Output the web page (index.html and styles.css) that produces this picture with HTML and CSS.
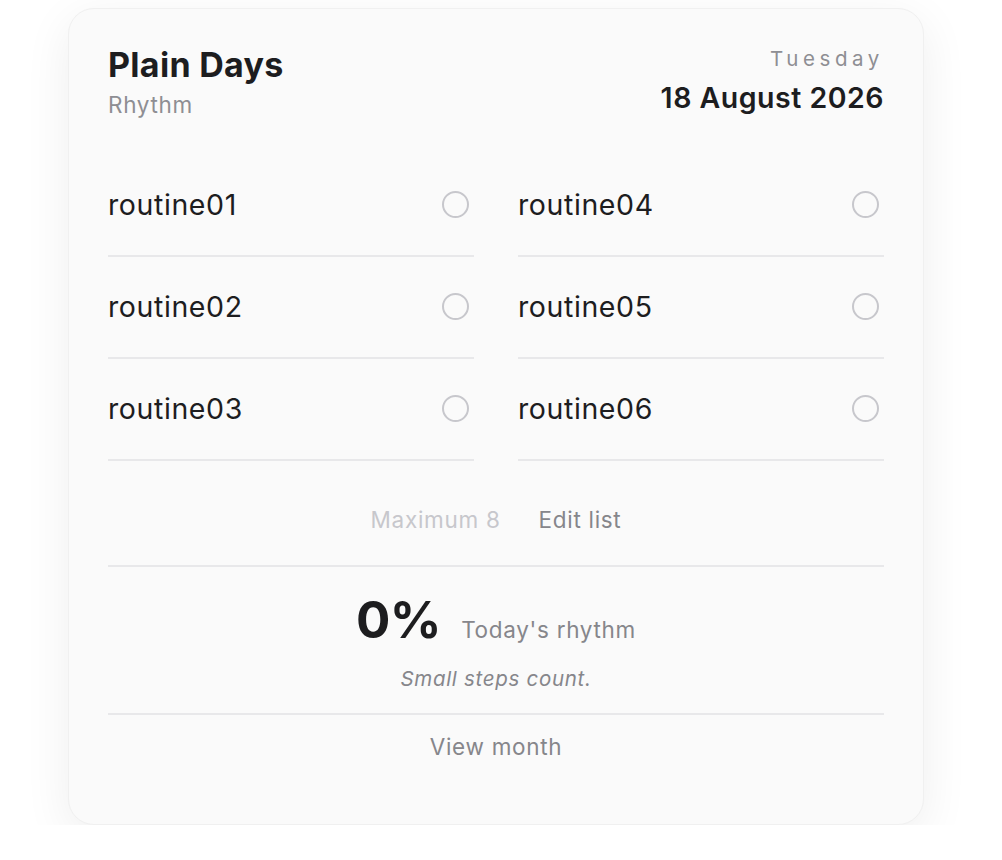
FILE: index.html
```html
<!DOCTYPE html>
<html lang="en">
<head>
    <meta charset="UTF-8">
    <meta name="viewport" content="width=device-width, initial-scale=1.0">
    <title>Plain Days</title>
    <link rel="stylesheet" href="styles.css">
</head>
<body>
    <div class="card">
        <div class="header">
            <div>
                <h1 class="title">Plain Days</h1>
                <div class="subtitle">Rhythm</div>
            </div>
            <div class="date">
                <div class="weekday">Tuesday</div>
                <div class="full-date">18 August 2026</div>
            </div>
        </div>

        <div class="routines">
            <div class="routine"><span>routine01</span><span class="check"></span></div>
            <div class="routine"><span>routine04</span><span class="check"></span></div>
            <div class="routine"><span>routine02</span><span class="check"></span></div>
            <div class="routine"><span>routine05</span><span class="check"></span></div>
            <div class="routine"><span>routine03</span><span class="check"></span></div>
            <div class="routine"><span>routine06</span><span class="check"></span></div>
        </div>

        <div class="list-actions">
            <span class="limit">Maximum 8</span>
            <span class="edit">Edit list</span>
        </div>

        <div class="stats">
            <div class="score">
                <span class="percent">0%</span>
                <span class="score-label">Today's rhythm</span>
            </div>
            <div class="motto">Small steps count.</div>
        </div>

        <div class="month-link">View month</div>
    </div>
</body>
</html>
```

FILE: styles.css
```css
body {
    margin: 0;
    padding: 8px 0 0;
    background: #ffffff;
    font-family: Inter, "Noto Sans", sans-serif;
    color: #1d1d1f;
}
.card {
    box-sizing: border-box;
    width: 856px;
    margin: 0 0 0 68px;
    padding: 36px 39px 0;
    height: 817px;
    background: #fafafa;
    border: 1px solid #f0f0f0;
    border-radius: 26px;
    box-shadow: 0 12px 48px rgba(0,0,0,0.07);
}
.header {
    display: flex;
    justify-content: space-between;
    align-items: flex-start;
}
.title {
    margin: 0;
    font-size: 34px;
    font-weight: 700;
    line-height: 1.2;
    letter-spacing: 0.3px;
}
.subtitle {
    margin-top: 5px;
    font-size: 22.5px;
    letter-spacing: 0.7px;
    color: #8e8e93;
}
.date {
    text-align: right;
    padding-top: 1px;
}
.weekday {
    font-size: 20.5px;
    letter-spacing: 4.6px;
    color: #8e8e93;
}
.full-date {
    margin-top: 9px;
    font-size: 28.5px;
    font-weight: 600;
    letter-spacing: 0.5px;
}
.routines {
    display: grid;
    grid-template-columns: 1fr 1fr;
    column-gap: 44px;
    margin-top: 37px;
}
.routine {
    display: flex;
    justify-content: space-between;
    align-items: center;
    height: 100px;
    border-bottom: 2px solid #e8e8ea;
    font-size: 28.5px;
    letter-spacing: 0.6px;
}
.check {
    width: 23px;
    height: 23px;
    margin-right: 5px;
    border: 2.5px solid #c7c7cc;
    border-radius: 50%;
}
.list-actions {
    display: flex;
    justify-content: center;
    gap: 38px;
    padding: 45px 0 32px;
    border-bottom: 2px solid #e8e8ea;
    font-size: 22.5px;
    letter-spacing: 0.7px;
}
.limit { color: #c7c7cc; }
.edit { color: #86868b; }
.stats {
    padding: 25px 0 22px;
    border-bottom: 2px solid #e8e8ea;
    text-align: center;
}
.score {
    display: flex;
    justify-content: center;
    align-items: baseline;
    gap: 20px;
}
.percent {
    font-size: 51px;
    font-weight: 700;
    line-height: 1.1;
    letter-spacing: -0.5px;
}
.score-label {
    font-size: 22.5px;
    letter-spacing: 0.7px;
    color: #86868b;
}
.motto {
    margin-top: 18px;
    font-size: 20.5px;
    font-style: italic;
    letter-spacing: 0.7px;
    color: #86868b;
}
.month-link {
    padding-top: 18px;
    text-align: center;
    font-size: 22.5px;
    letter-spacing: 0.7px;
    color: #86868b;
}
```
